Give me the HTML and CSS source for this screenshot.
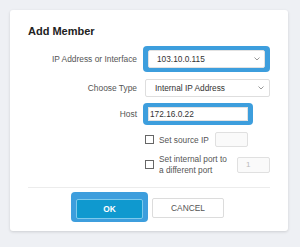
FILE: index.html
```html
<!DOCTYPE html>
<html>
<head>
<meta charset="utf-8">
<link rel="stylesheet" href="styles.css">
</head>
<body>
<div class="card">
  <div class="title">Add Member</div>
  <div class="row r1">
    <div class="label">IP Address or Interface</div>
    <div class="ring ring-sel">
      <div class="select sel-hl"><span>103.10.0.115</span><svg class="chev" width="6" height="4" viewBox="0 0 6 4"><path d="M0.5 0.5 L3 3 L5.5 0.5" fill="none" stroke="#999" stroke-width="1"/></svg></div>
    </div>
  </div>
  <div class="row r2">
    <div class="label">Choose Type</div>
    <div class="select sel-plain"><span>Internal IP Address</span><svg class="chev" width="6" height="4" viewBox="0 0 6 4"><path d="M0.5 0.5 L3 3 L5.5 0.5" fill="none" stroke="#999" stroke-width="1"/></svg></div>
  </div>
  <div class="row r3">
    <div class="label">Host</div>
    <div class="ring ring-host">
      <div class="input host">172.16.0.22</div>
    </div>
  </div>
  <div class="row r4">
    <div class="label"></div>
    <div class="check"><span class="box"></span><span class="ctext">Set source IP</span><span class="mini src"></span></div>
  </div>
  <div class="row r5">
    <div class="label"></div>
    <div class="check"><span class="box"></span><span class="ctext wrap">Set internal port to a different port</span><span class="mini port">1</span></div>
  </div>
  <div class="divider"></div>
  <div class="actions">
    <div class="ring ring-ok"><button class="btn ok">OK</button></div>
    <button class="btn cancel">CANCEL</button>
  </div>
</div>
</body>
</html>
```
FILE: styles.css
```css
html, body {
  margin: 0;
  padding: 0;
  background: #eef0f4;
  font-family: "Liberation Sans", Arial, sans-serif;
}
body {
  width: 300px;
  height: 247px;
  overflow: hidden;
  padding: 10px 0 0 10px;
  box-sizing: border-box;
}
.card {
  width: 278px;
  height: 221px;
  box-sizing: border-box;
  background: #fff;
  border-radius: 3px;
  box-shadow: 0 1px 3px rgba(0,0,0,0.14);
  padding: 13px 18px 0 18px;
}
.title {
  font-size: 11px;
  font-weight: bold;
  line-height: 16px;
  color: #222;
}
.row {
  display: flex;
  align-items: center;
}
.label {
  width: 109px;
  flex: none;
  text-align: right;
  font-size: 8.4px;
  color: #555;
  margin-right: 8px;
}
.r1 { margin-top: 7px; height: 26px; }
.r2 { margin-top: 7px; height: 18px; }
.r3 { margin-top: 6px; height: 22px; }
.r4 { margin-top: 7px; height: 15px; }
.r5 { margin-top: 9px; height: 17px; }
.ring {
  background: #3d9edd;
  border-radius: 4px;
  box-sizing: border-box;
}
.ring-sel {
  margin-left: -2px;
  width: 130px;
  height: 26px;
  padding: 4px 5px;
}
.select {
  display: flex;
  align-items: center;
  justify-content: space-between;
  box-sizing: border-box;
  background: #fff;
  font-size: 8.3px;
  color: #333;
  border-radius: 2px;
}
.sel-hl {
  height: 18px;
  padding: 0 4px 0 8px;
  border: 1px solid #e2e2e2;
}
.sel-plain {
  width: 126px;
  height: 18px;
  padding: 0 5px 0 9px;
  border: 1px solid #dedede;
}
.chev { flex: none; }
.ring-host {
  margin-left: -2px;
  width: 110px;
  height: 22px;
  padding: 4px 5px;
}
.input.host {
  height: 14px;
  box-sizing: border-box;
  background: #fff;
  border: 1px solid #e2e2e2;
  font-size: 8.3px;
  line-height: 12px;
  color: #333;
  padding-left: 1px;
}
.check {
  display: flex;
  align-items: center;
  font-size: 8.3px;
  color: #555;
}
.box {
  flex: none;
  margin-right: 5px;
  box-sizing: border-box;
  width: 9px;
  height: 9px;
  border: 1px solid #666;
  background: #fff;
}
.ctext { line-height: 12px; }
.ctext.wrap { width: 72px; line-height: 11px; }
.mini {
  display: block;
  box-sizing: border-box;
  border: 1px solid #e0e0e0;
  border-radius: 2px;
  background: #fafafa;
  height: 15px;
  width: 33px;
  font-size: 8px;
  color: #bbb;
  line-height: 13px;
  padding-left: 8px;
}
.mini.src { margin-left: 6px; }
.mini.port { margin-left: 6px; height: 16px; line-height: 14px; }
.divider {
  height: 1px;
  background: #ececec;
  margin-top: 14px;
}
.actions {
  display: flex;
  align-items: center;
  margin-top: 4px;
  padding-left: 43px;
  gap: 4px;
}
.ring-ok {
  width: 77px;
  height: 30px;
  padding: 6px 5px 4px 5px;
}
.btn {
  font-family: "Liberation Sans", Arial, sans-serif;
  font-size: 8.4px;
  height: 20px;
  box-sizing: border-box;
  border-radius: 2px;
  padding: 0;
  cursor: pointer;
}
.ok {
  width: 67px;
  background: #0f99cf;
  border: 1px solid #7ccaec;
  color: #fff;
  font-weight: bold;
}
.cancel {
  width: 72px;
  background: #fff;
  border: 1px solid #dcdcdc;
  color: #555;
  margin-top: 1px;
}
```
